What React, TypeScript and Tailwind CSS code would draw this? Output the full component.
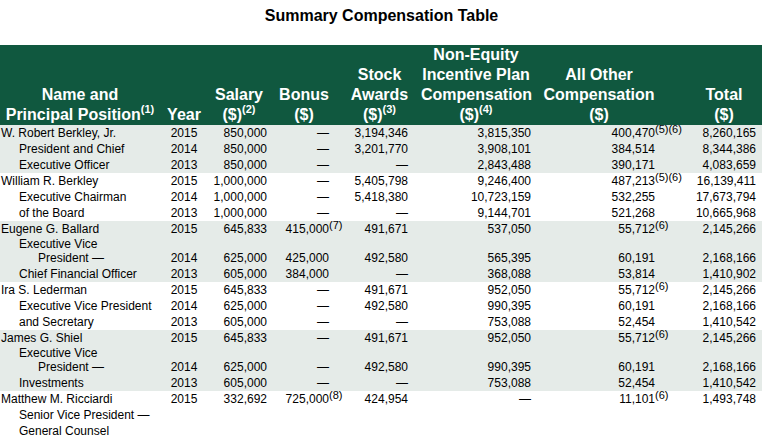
type Row = {
  name: string
  indent?: 0 | 1 | 2
  year?: string
  salary?: string
  bonus?: string
  bonusSup?: string
  stock?: string
  nonEquity?: string
  other?: string
  otherSup?: string
  total?: string
  size?: 'full' | 'short' | 'mid'
}

type Band = { shaded: boolean; rows: Row[] }

const D = '—'

const bands: Band[] = [
  {
    shaded: true,
    rows: [
      { name: 'W. Robert Berkley, Jr.', year: '2015', salary: '850,000', bonus: D, stock: '3,194,346', nonEquity: '3,815,350', other: '400,470', otherSup: '(5)(6)', total: '8,260,165' },
      { name: 'President and Chief', indent: 1, year: '2014', salary: '850,000', bonus: D, stock: '3,201,770', nonEquity: '3,908,101', other: '384,514', total: '8,344,386' },
      { name: 'Executive Officer', indent: 1, year: '2013', salary: '850,000', bonus: D, stock: D, nonEquity: '2,843,488', other: '390,171', total: '4,083,659' },
    ],
  },
  {
    shaded: false,
    rows: [
      { name: 'William R. Berkley', year: '2015', salary: '1,000,000', bonus: D, stock: '5,405,798', nonEquity: '9,246,400', other: '487,213', otherSup: '(5)(6)', total: '16,139,411' },
      { name: 'Executive Chairman', indent: 1, year: '2014', salary: '1,000,000', bonus: D, stock: '5,418,380', nonEquity: '10,723,159', other: '532,255', total: '17,673,794' },
      { name: 'of the Board', indent: 1, year: '2013', salary: '1,000,000', bonus: D, stock: D, nonEquity: '9,144,701', other: '521,268', total: '10,665,968' },
    ],
  },
  {
    shaded: true,
    rows: [
      { name: 'Eugene G. Ballard', year: '2015', salary: '645,833', bonus: '415,000', bonusSup: '(7)', stock: '491,671', nonEquity: '537,050', other: '55,712', otherSup: '(6)', total: '2,145,266' },
      { name: 'Executive Vice', indent: 1, size: 'short' },
      { name: 'President —', indent: 2, size: 'mid', year: '2014', salary: '625,000', bonus: '425,000', stock: '492,580', nonEquity: '565,395', other: '60,191', total: '2,168,166' },
      { name: 'Chief Financial Officer', indent: 1, year: '2013', salary: '605,000', bonus: '384,000', stock: D, nonEquity: '368,088', other: '53,814', total: '1,410,902' },
    ],
  },
  {
    shaded: false,
    rows: [
      { name: 'Ira S. Lederman', year: '2015', salary: '645,833', bonus: D, stock: '491,671', nonEquity: '952,050', other: '55,712', otherSup: '(6)', total: '2,145,266' },
      { name: 'Executive Vice President', indent: 1, year: '2014', salary: '625,000', bonus: D, stock: '492,580', nonEquity: '990,395', other: '60,191', total: '2,168,166' },
      { name: 'and Secretary', indent: 1, year: '2013', salary: '605,000', bonus: D, stock: D, nonEquity: '753,088', other: '52,454', total: '1,410,542' },
    ],
  },
  {
    shaded: true,
    rows: [
      { name: 'James G. Shiel', year: '2015', salary: '645,833', bonus: D, stock: '491,671', nonEquity: '952,050', other: '55,712', otherSup: '(6)', total: '2,145,266' },
      { name: 'Executive Vice', indent: 1, size: 'short' },
      { name: 'President —', indent: 2, size: 'mid', year: '2014', salary: '625,000', bonus: D, stock: '492,580', nonEquity: '990,395', other: '60,191', total: '2,168,166' },
      { name: 'Investments', indent: 1, year: '2013', salary: '605,000', bonus: D, stock: D, nonEquity: '753,088', other: '52,454', total: '1,410,542' },
    ],
  },
  {
    shaded: false,
    rows: [
      { name: 'Matthew M. Ricciardi', year: '2015', salary: '332,692', bonus: '725,000', bonusSup: '(8)', stock: '424,954', nonEquity: D, other: '11,101', otherSup: '(6)', total: '1,493,748' },
      { name: 'Senior Vice President —', indent: 1 },
      { name: 'General Counsel', indent: 1 },
    ],
  },
]

const cols = 'grid grid-cols-[160px_48px_62px_68px_83px_110px_136px_95px]'

const rowSize = {
  full: 'h-4 leading-4',
  short: 'h-[14px] leading-[14px]',
  mid: 'h-[15px] leading-[15px]',
}

const indents = ['pl-px', 'pl-[19px]', 'pl-[38px]']

function Num({ value, sup }: { value?: string; sup?: string }) {
  if (!value) return null
  return (
    <span className="relative">
      {value}
      {sup && (
        <sup className="absolute left-full top-[-2px] text-[11px] leading-none">{sup}</sup>
      )}
    </span>
  )
}

function HeadSup({ children }: { children: string }) {
  return <sup className="text-[11px] top-[-7px]">{children}</sup>
}

export default function App() {
  return (
    <div className="w-[763px] h-[439px] overflow-hidden bg-white text-black font-['Liberation_Sans',Arial,sans-serif]">
      {/* Title */}
      <div className="h-[45px] pt-[7px] text-center text-[16px] font-bold leading-[18px]">
        Summary Compensation Table
      </div>

      <div className="w-[762px]">
        {/* Header */}
        <div className={`${cols} h-20 items-end bg-[#10583f] text-white text-[16px] font-bold leading-5 text-center`}>
          <div>
            Name and
            <br />
            Principal Position<HeadSup>(1)</HeadSup>
          </div>
          <div>Year</div>
          <div>
            Salary
            <br />
            ($)<HeadSup>(2)</HeadSup>
          </div>
          <div>
            Bonus
            <br />
            ($)
          </div>
          <div>
            Stock
            <br />
            Awards
            <br />
            ($)<HeadSup>(3)</HeadSup>
          </div>
          <div className="whitespace-nowrap">
            Non-Equity
            <br />
            Incentive Plan
            <br />
            Compensation
            <br />
            ($)<HeadSup>(4)</HeadSup>
          </div>
          <div>
            All Other
            <br />
            Compensation
            <br />
            ($)
          </div>
          <div className="pl-[19px]">
            Total
            <br />
            ($)
          </div>
        </div>

        {/* Body */}
        {bands.map((band, bi) => (
          <div key={bi} className={band.shaded ? 'bg-[#e5ebe8]' : 'bg-white'}>
            {band.rows.map((r, ri) => (
              <div key={ri} className={`${cols} ${rowSize[r.size ?? 'full']} text-[12px] whitespace-nowrap`}>
                <div className={indents[r.indent ?? 0]}>{r.name}</div>
                <div className="text-center">{r.year}</div>
                <div className="text-right pr-[3px]">{r.salary}</div>
                <div className="text-right pr-[9px]">
                  <Num value={r.bonus} sup={r.bonusSup} />
                </div>
                <div className="text-right pr-[13px]">{r.stock}</div>
                <div className="text-right">{r.nonEquity}</div>
                <div className="text-right pr-[12px]">
                  <Num value={r.other} sup={r.otherSup} />
                </div>
                <div className="text-right pr-[6px]">{r.total}</div>
              </div>
            ))}
          </div>
        ))}
      </div>
    </div>
  )
}
